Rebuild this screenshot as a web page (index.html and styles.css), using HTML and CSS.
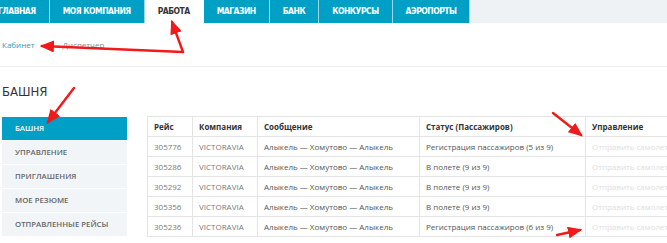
FILE: index.html
```html
<!DOCTYPE html>
<html lang="ru">
<head>
    <meta charset="UTF-8">
    <meta name="viewport" content="width=device-width, initial-scale=1.0">
    <title>Башня</title>
    <link rel="stylesheet" href="styles.css">
</head>
<body>
    <div class="topbar">
        <ul class="menu">
            <li>Главная</li>
            <li>Моя компания</li>
            <li class="active">Работа</li>
            <li>Магазин</li>
            <li>Банк</li>
            <li>Конкурсы</li>
            <li>Аэропорты</li>
        </ul>
    </div>

    <div class="subnav">
        <a class="subnav-link current">Кабинет</a>
        <a class="subnav-link">Диспетчер</a>
    </div>

    <h2 class="page-title">Башня</h2>

    <div class="layout">
        <ul class="side-menu">
            <li class="active">Башня</li>
            <li>Управление</li>
            <li>Приглашения</li>
            <li>Мое резюме</li>
            <li>Отправленные рейсы</li>
        </ul>

        <div class="table-wrap">
            <table class="flights">
                <thead>
                    <tr>
                        <th class="col-id">Рейс</th>
                        <th class="col-company">Компания</th>
                        <th class="col-msg">Сообщение</th>
                        <th class="col-status">Статус (Пассажиров)</th>
                        <th class="col-action">Управление</th>
                    </tr>
                </thead>
                <tbody>
                    <tr>
                        <td class="num">305776</td>
                        <td class="muted">VICTORAVIA</td>
                        <td>Алыкель — Хомутово — Алыкель</td>
                        <td>Регистрация пассажиров (5 из 9)</td>
                        <td class="action">Отправить самолет</td>
                    </tr>
                    <tr>
                        <td class="num">305286</td>
                        <td class="muted">VICTORAVIA</td>
                        <td>Алыкель — Хомутово — Алыкель</td>
                        <td>В полете (9 из 9)</td>
                        <td class="action">Отправить самолет</td>
                    </tr>
                    <tr>
                        <td class="num">305292</td>
                        <td class="muted">VICTORAVIA</td>
                        <td>Алыкель — Хомутово — Алыкель</td>
                        <td>В полете (9 из 9)</td>
                        <td class="action">Отправить самолет</td>
                    </tr>
                    <tr>
                        <td class="num">305356</td>
                        <td class="muted">VICTORAVIA</td>
                        <td>Алыкель — Хомутово — Алыкель</td>
                        <td>В полете (9 из 9)</td>
                        <td class="action">Отправить самолет</td>
                    </tr>
                    <tr>
                        <td class="num">305236</td>
                        <td class="muted">VICTORAVIA</td>
                        <td>Алыкель — Хомутово — Алыкель</td>
                        <td>Регистрация пассажиров (6 из 9)</td>
                        <td class="action">Отправить самолет</td>
                    </tr>
                </tbody>
            </table>
        </div>
    </div>

    <!-- red annotation arrows drawn over the screenshot -->
    <svg class="annotations" width="667" height="243" viewBox="0 0 667 243">
        <defs>
            <marker id="head" markerWidth="6" markerHeight="5" refX="5" refY="2.5" orient="auto" markerUnits="strokeWidth">
                <polygon points="0,0 6,2.5 0,5" fill="#f01a1a"/>
            </marker>
        </defs>
        <g stroke="#f01a1a" stroke-width="2.4" fill="none" stroke-linecap="round">
            <line x1="183" y1="52" x2="172" y2="22" marker-end="url(#head)"/>
            <line x1="183" y1="52" x2="42" y2="46" marker-end="url(#head)"/>
            <line x1="74" y1="88" x2="48" y2="122" marker-end="url(#head)"/>
            <line x1="553" y1="113" x2="581" y2="135" marker-end="url(#head)"/>
            <line x1="557" y1="235" x2="580" y2="230" marker-end="url(#head)"/>
        </g>
    </svg>
</body>
</html>
```

FILE: styles.css
```css
body {
    margin: 0;
    width: 667px;
    height: 243px;
    overflow: hidden;
    position: relative;
    font-family: "Open Sans", Arial, sans-serif;
    font-size: 8px;
    color: #444;
    background: #fff;
}
.topbar {
    height: 23px;
    background: #eef2f5;
    display: flex;
}
.menu {
    display: flex;
    list-style: none;
    margin: 0 0 0 -15px;
    padding: 0;
}
.menu li {
    padding: 0 13px;
    line-height: 23px;
    background: #00a0c6;
    color: #fff;
    font-family: "Liberation Sans Narrow", "DejaVu Sans Condensed", sans-serif;
    font-weight: bold;
    font-size: 8.5px;
    letter-spacing: -0.5px;
    text-transform: uppercase;
    border-right: 1px solid #9fd6e6;
}
.menu li.active {
    background: #fff;
    color: #333;
    border-right-color: #fff;
}
.subnav {
    height: 43px;
    display: flex;
    align-items: center;
    gap: 28px;
    padding: 0 2px;
    border-bottom: 1px solid #eeeeee;
}
.subnav-link {
    color: #888;
    font-size: 8px;
}
.subnav-link.current {
    color: #3d93b3;
}
.page-title {
    margin: 17px 0 0 2px;
    font-family: "Liberation Sans Narrow", "DejaVu Sans Condensed", sans-serif;
    font-weight: normal;
    font-size: 13px;
    line-height: 16px;
    color: #333;
    text-transform: uppercase;
}
.layout {
    display: flex;
    gap: 20px;
    padding-left: 2px;
    margin-top: 17px;
}
.side-menu {
    list-style: none;
    margin: 0;
    padding: 0;
    width: 125px;
    flex-shrink: 0;
}
.side-menu li {
    height: 23px;
    line-height: 23px;
    margin-bottom: 1px;
    padding-left: 13px;
    background: #f2f5f7;
    color: #666;
    font-weight: 600;
    font-size: 7.8px;
    text-transform: uppercase;
}
.side-menu li.active {
    background: #00a0c6;
    color: #fff;
}
.table-wrap {
    margin-top: -1px;
}
.flights {
    border-collapse: collapse;
    width: 560px;
    border: 1px solid #dddddd;
}
.flights th,
.flights td {
    height: 19px;
    padding: 0 6px;
    text-align: left;
    white-space: nowrap;
    border: 1px solid #e4e4e4;
}
.flights th {
    font-weight: bold;
    color: #333;
}
.flights td {
    color: #555;
}
.col-id { width: 32px; }
.col-company { width: 52px; }
.col-msg { width: 149px; }
.col-status { width: 153px; }
.flights td.num,
.flights td.muted {
    color: #7a7a7a;
}
.flights td.action {
    color: #dedede;
}
.annotations {
    position: absolute;
    left: 0;
    top: 0;
    pointer-events: none;
}
```
